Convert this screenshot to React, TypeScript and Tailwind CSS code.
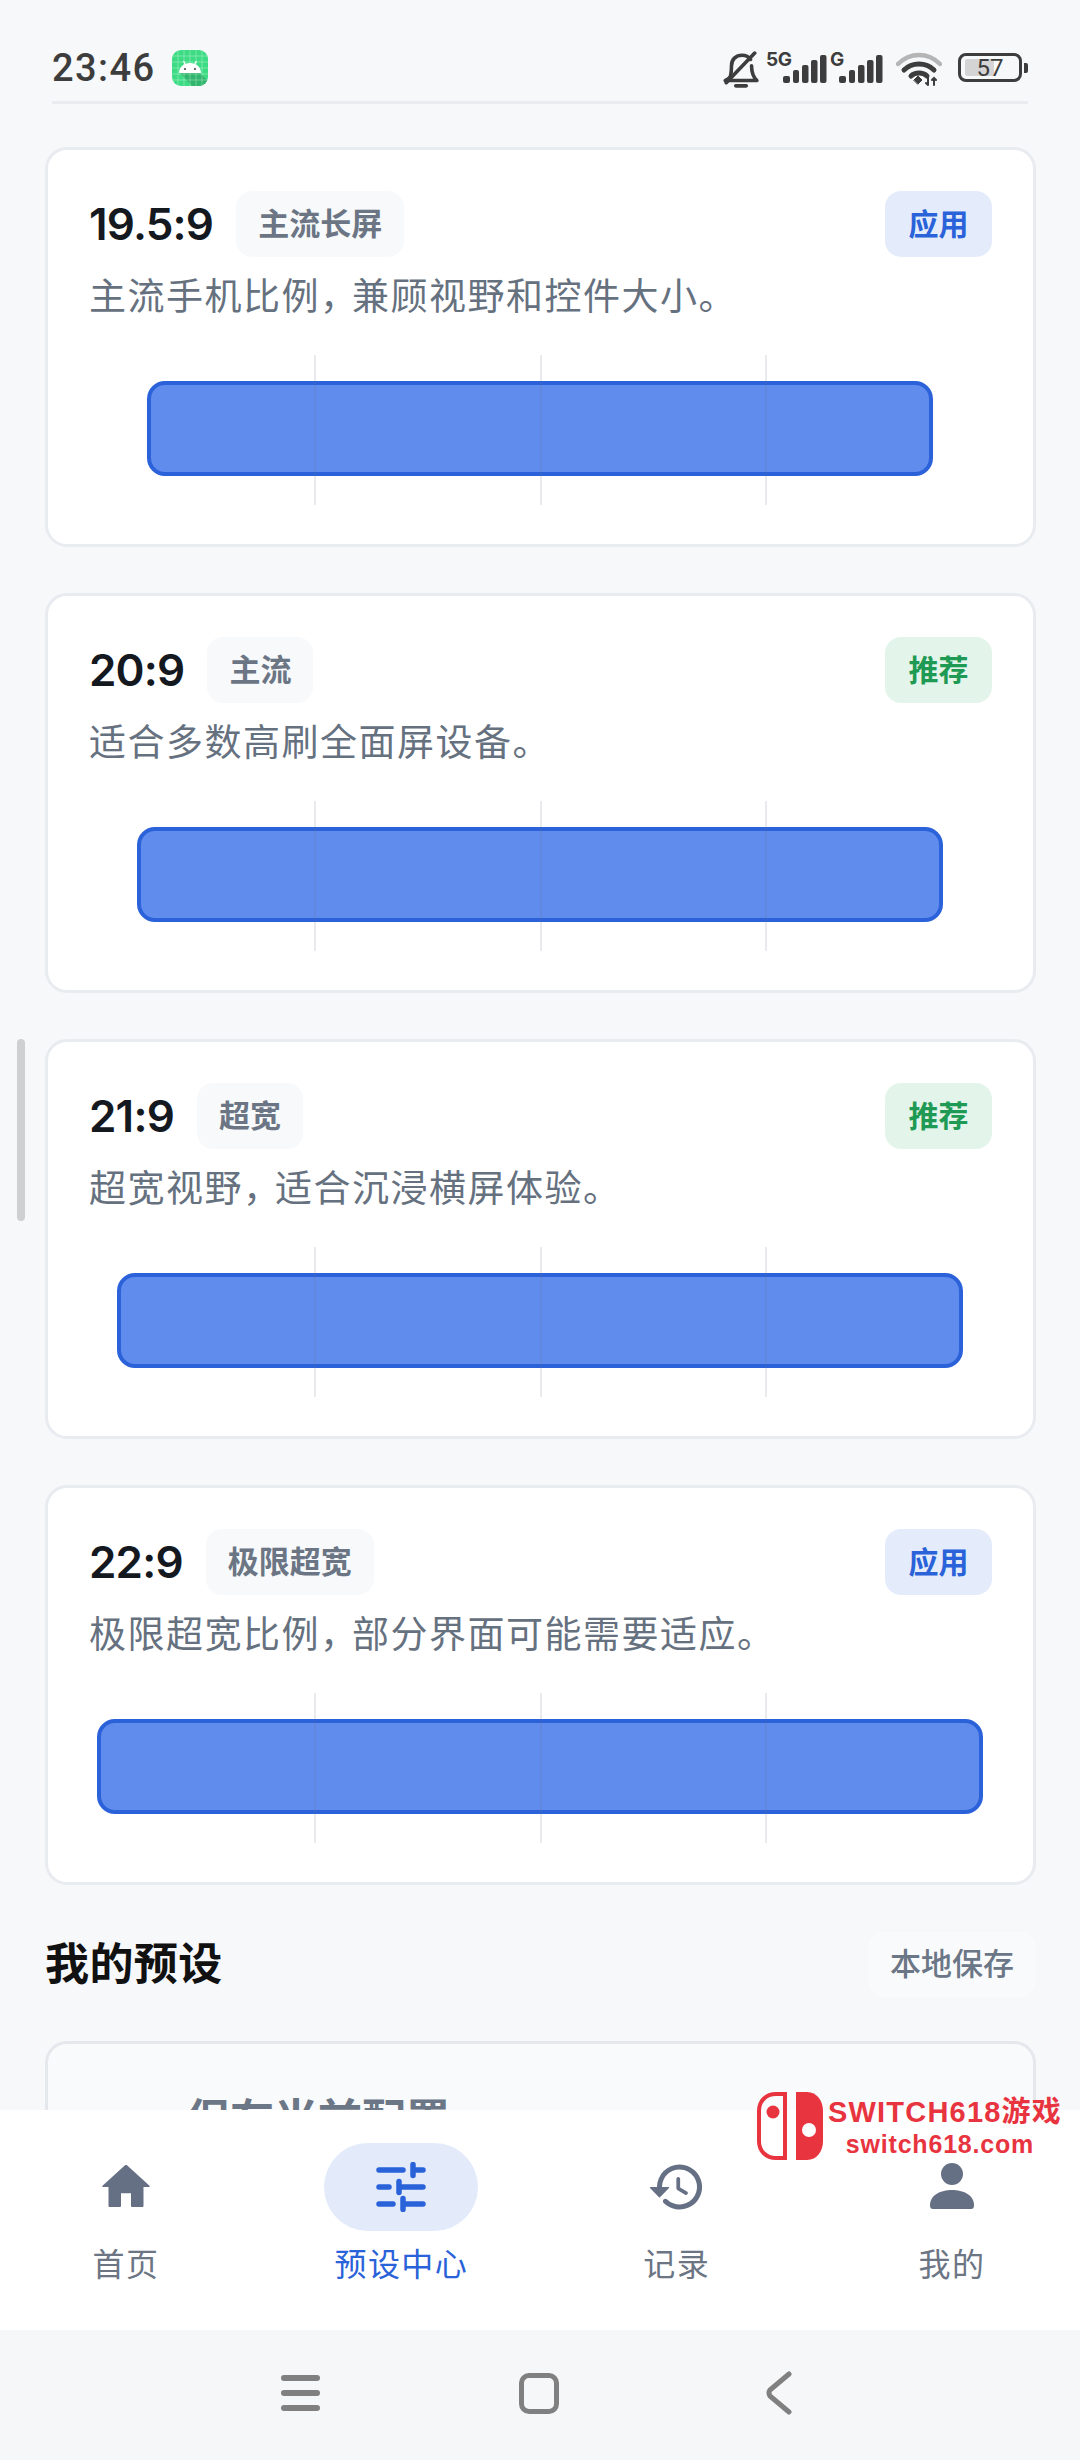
import React from 'react';

const presets = [
    { ratio: '19.5:9', tag: '主流长屏', action: '应用', desc: ['主流手机比例', '兼顾视野和控件大小。'], bar: 'w-[786px]' },
    { ratio: '20:9', tag: '主流', action: '推荐', desc: ['适合多数高刷全面屏设备。'], bar: 'w-[806px]' },
    { ratio: '21:9', tag: '超宽', action: '推荐', desc: ['超宽视野', '适合沉浸横屏体验。'], bar: 'w-[846px]' },
    { ratio: '22:9', tag: '极限超宽', action: '应用', desc: ['极限超宽比例', '部分界面可能需要适应。'], bar: 'w-[886px]' },
];

const Signal: React.FC = () => (
    <svg width="44" height="28" viewBox="0 0 44 28" fill="#3d3d3d">
        <rect x="0" y="21" width="7" height="7" rx="2" />
        <rect x="10" y="15" width="6" height="13" rx="2" />
        <rect x="19" y="10" width="6.5" height="18" rx="2" />
        <rect x="28" y="5" width="6.5" height="23" rx="2" />
        <rect x="37" y="0" width="6.5" height="28" rx="2" />
    </svg>
);

const StatusBar: React.FC = () => (
    <div className="mx-[52px] h-[104px] border-b-[3px] border-[#e9ebef] flex items-start justify-between pt-[50px]">
        <div className="flex items-center gap-[17px]">
            <span className="text-[38px] leading-[36px] font-medium text-[#3d3d3d] tracking-[1.4px] font-['Roboto',sans-serif]">23:46</span>
            <svg width="36" height="36" viewBox="0 0 36 36">
                <defs>
                    <clipPath id="appClip"><rect width="36" height="36" rx="9" /></clipPath>
                </defs>
                <g clipPath="url(#appClip)">
                    <rect width="36" height="36" fill="#3ddc84" />
                    <path d="M8 23 L28 23 L36 31 L36 36 L20 36 Z" fill="#2fb56c" />
                    <path d="M6 0V36M12 0V36M18 0V36M24 0V36M30 0V36M0 6H36M0 12H36M0 18H36M0 24H36M0 30H36" stroke="#ffffff" strokeOpacity="0.3" strokeWidth="1" />
                    <path d="M7 23 C7 17 12 13 18 13 C24 13 29 17 29 23 Z" fill="#ffffff" />
                    <path d="M11.5 11 L13.5 14.5 M24.5 11 L22.5 14.5" stroke="#ffffff" strokeWidth="1.2" />
                    <circle cx="13" cy="19" r="1" fill="#3d3d3d" />
                    <circle cx="23" cy="19" r="1" fill="#3d3d3d" />
                </g>
            </svg>
        </div>
        <div className="flex items-start text-[#3d3d3d] font-['Inter',sans-serif]">
            <svg width="36" height="38" viewBox="0 0 34 36" fill="none" stroke="#3d3d3d" strokeWidth="3.4" strokeLinecap="round" strokeLinejoin="round" className="mt-[1px]">
                <path d="M7 24 C8 20 8 17 8 14 C8 8 12 4 18 4 C21 4 24 5 26 8 M27 14 C27 19 28 24 32 28 L2 28 C4 27 6 26 7 24" />
                <path d="M3 30 L30 2" />
                <path d="M12 33 H22" />
            </svg>
            <div className="relative w-[61px] h-[36px] ml-[7px]">
                <span className="absolute left-0 top-[1px] text-[19px] leading-[18px] font-bold tracking-[-0.5px]">5G</span>
                <div className="absolute right-0 top-[5px]"><Signal /></div>
            </div>
            <div className="relative w-[53px] h-[36px] ml-[3px]">
                <span className="absolute left-0 top-[1px] text-[19px] leading-[18px] font-bold">G</span>
                <div className="absolute right-0 top-[5px]"><Signal /></div>
            </div>
            <svg width="46" height="34" viewBox="0 0 46 34" fill="none" strokeLinecap="round" className="ml-[13px] mt-[2px]">
                <path d="M2 12 C14 0 32 0 44 12" stroke="#b5b5b5" strokeWidth="4.5" />
                <path d="M8 18 C16 10 30 10 38 18" stroke="#3d3d3d" strokeWidth="5" />
                <path d="M15 24 C19 20 27 20 31 24" stroke="#3d3d3d" strokeWidth="5" />
                <path d="M18 28 L22 24 L26 28 L22 32 Z" fill="#3d3d3d" stroke="#3d3d3d" strokeWidth="1" />
                <path d="M32 26 V33 M30 31 L32 33 M38 33 V26 M36 28 L38 26 L40 28" stroke="#3d3d3d" strokeWidth="2" />
            </svg>
            <div className="flex items-center ml-[16px] mt-[3px]">
                <div className="relative w-[64px] h-[29px] rounded-[8px] border-[3px] border-[#3d3d3d] overflow-hidden">
                    <div className="absolute left-[4px] top-[3px] bottom-[3px] w-[29px] bg-[#d4d4d4] rounded-[2px]" />
                    <span className="absolute inset-0 flex items-center justify-center text-[24px] leading-none text-[#3d3d3d] font-['Roboto',sans-serif]">57</span>
                </div>
                <div className="w-[4px] h-[10px] bg-[#3d3d3d] rounded-r-[2px] ml-[2px]" />
            </div>
        </div>
    </div>
);

type Preset = (typeof presets)[number];

const PresetCard: React.FC<{ preset: Preset }> = ({ preset }) => (
    <div className="bg-white border-[3px] border-[#e8ebef] rounded-[22px] px-[41px] pt-[41px] pb-[39px]">
        <div className="flex items-center justify-between">
            <div className="flex items-center gap-[23px]">
                <span className="text-[44px] leading-[66px] font-semibold tracking-[-0.8px] text-[#14181f]">{preset.ratio}</span>
                <span className="h-[66px] px-[22px] flex items-center rounded-[16px] bg-[#f7f9fb] text-[31px] font-semibold text-[#6b7584]">{preset.tag}</span>
            </div>
            {preset.action === '推荐' ? (
                <span className="h-[66px] w-[107px] flex items-center justify-center rounded-[16px] bg-[#e3f5ea] text-[30px] font-semibold text-[#1f9a54]">{preset.action}</span>
            ) : (
                <span className="h-[66px] w-[107px] flex items-center justify-center rounded-[16px] bg-[#e4ecfb] text-[30px] font-semibold text-[#2a62d9]">{preset.action}</span>
            )}
        </div>
        <p className="mt-[14px] text-[37px] leading-[52px] tracking-[1.5px] text-[#667180]">
            {preset.desc[0]}
            {preset.desc[1] && (
                <>
                    <span className="tracking-[-5px]">，</span>
                    {preset.desc[1]}
                </>
            )}
        </p>
        <div className="relative mt-[32px] h-[150px] flex items-center justify-center">
            <div className={`${preset.bar} h-[95px] -ml-[2px] mb-[3px] rounded-[18px] bg-[#608cee] border-[4px] border-[#2b62d9]`} />
            <div className="absolute top-0 bottom-0 left-1/4 -ml-[1px] w-[2px] bg-[#64748b]/15" />
            <div className="absolute top-0 bottom-0 left-1/2 -ml-[1px] w-[2px] bg-[#64748b]/15" />
            <div className="absolute top-0 bottom-0 left-3/4 -ml-[1px] w-[2px] bg-[#64748b]/15" />
        </div>
    </div>
);

const Watermark: React.FC = () => (
    <div className="absolute left-[757px] top-[2092px] flex items-center text-[#e8343f]">
        <svg width="68" height="68" viewBox="0 0 68 68">
            <path d="M28 2 H19 C9 2 2 9 2 19 V49 C2 59 9 66 19 66 H28 Z" fill="none" stroke="#e8343f" strokeWidth="4" />
            <circle cx="16" cy="20" r="6.5" fill="#e8343f" />
            <path d="M39 0 H50 C60 0 66 9 66 19 V49 C66 59 60 68 50 68 H39 Z" fill="#e8343f" />
            <circle cx="52" cy="38" r="7" fill="#ffffff" />
        </svg>
        <div className="ml-[3px] flex flex-col items-center font-['Liberation_Sans','Noto_Sans_CJK_SC',sans-serif] font-bold">
            <span className="text-[29px] leading-[36px] tracking-[1.2px] whitespace-nowrap">SWITCH618游戏</span>
            <span className="mr-[10px] text-[25px] leading-[29px] tracking-[0.8px] whitespace-nowrap">switch618.com</span>
        </div>
    </div>
);

const NavItem: React.FC<{ label: string; active?: boolean; icon: React.ReactNode }> = ({ label, active, icon }) => (
    <div className="w-[154px] flex flex-col items-center">
        <div className={`w-[154px] h-[88px] rounded-full flex items-center justify-center ${active ? 'bg-[#e3ebfb]' : ''}`}>{icon}</div>
        <span className={`mt-[12px] text-[32px] leading-[44px] tracking-[1.4px] whitespace-nowrap ${active ? 'text-[#2a62d9]' : 'text-[#6b7584]'}`}>{label}</span>
    </div>
);

const BottomNav: React.FC = () => (
    <div className="relative h-[220px] bg-white shrink-0 flex justify-between pl-[49px] pr-[51px] pt-[33px]">
        <NavItem
            label="首页"
            icon={
                <svg width="60" height="60" viewBox="0 0 24 24" fill="#667085">
                    <path d="M10 19.5v-5h4v5c0 .3.2.5.5.5h4c.3 0 .5-.2.5-.5V12h2.2c.3 0 .4-.3.2-.5L12.4 3.3c-.2-.2-.6-.2-.8 0L2.6 11.5c-.2.2-.1.5.2.5H5v7.5c0 .3.2.5.5.5h4c.3 0 .5-.2.5-.5z" />
                </svg>
            }
        />
        <NavItem
            active
            label="预设中心"
            icon={
                <svg width="50" height="50" viewBox="0 0 50 50" fill="none" stroke="#2a62d9" strokeWidth="5.5" strokeLinecap="round">
                    <path d="M3 8 H27 M37 8 H47 M37 2.5 V13.5" />
                    <path d="M3 25 H13 M23 25 H47 M23 19.5 V30.5" />
                    <path d="M3 42 H17 M27 42 H47 M27 36.5 V47.5" />
                </svg>
            }
        />
        <NavItem
            label="记录"
            icon={
                <svg width="60" height="60" viewBox="0 0 24 24" fill="#667085">
                    <path d="M13 3a9 9 0 0 0-9 9H1.4c-.2 0-.3.2-.2.4l3.6 3.7c.1.1.3.1.4 0l3.6-3.7c.2-.2.1-.4-.2-.4H6a7 7 0 1 1 2.05 4.95c-.4-.4-1-.4-1.4 0s-.4 1 0 1.4A9 9 0 1 0 13 3z" />
                    <path d="M12.5 8c-.4 0-.75.35-.75.75V12.4c0 .35.2.68.5.86l3 1.8c.35.2.8.1 1-.26.2-.35.1-.8-.25-1l-2.75-1.63V8.75c0-.4-.35-.75-.75-.75z" />
                </svg>
            }
        />
        <NavItem
            label="我的"
            icon={
                <svg width="60" height="60" viewBox="0 0 60 60" fill="#667085">
                    <circle cx="30" cy="17" r="11" />
                    <path d="M8 48 C8 38 19 33 30 33 C41 33 52 38 52 48 C52 51 51 52 49 52 H11 C9 52 8 51 8 48 Z" />
                </svg>
            }
        />
    </div>
);

const SystemBar: React.FC = () => (
    <div className="h-[130px] bg-[#f6f7f9] shrink-0 flex items-center pl-[281px] pb-[4px]">
        <div className="w-[39px] h-[36px] flex flex-col justify-between">
            <div className="h-[6px] rounded-full bg-[#808080]" />
            <div className="h-[6px] rounded-full bg-[#808080]" />
            <div className="h-[6px] rounded-full bg-[#808080]" />
        </div>
        <div className="ml-[199px] w-[40px] h-[41px] rounded-[10px] border-[5px] border-[#808080]" />
        <svg width="26" height="44" viewBox="0 0 26 44" fill="none" stroke="#808080" strokeWidth="5" strokeLinecap="round" strokeLinejoin="round" className="ml-[207px]">
            <path d="M23 3 L4 19 Q2 22 4 25 L23 41" />
        </svg>
    </div>
);

export default function App() {
    return (
        <div className="relative w-[1080px] h-[2460px] overflow-hidden flex flex-col bg-[#f7f8fa] font-['Inter','Noto_Sans_CJK_SC',sans-serif]">
            <StatusBar />
            <div className="flex-1 overflow-hidden pl-[45px] pr-[44px] pt-[43px]">
                <div className="flex flex-col gap-[46px]">
                    {presets.map((p) => (
                        <PresetCard key={p.ratio} preset={p} />
                    ))}
                </div>
                <div className="mt-[47px] flex items-center justify-between">
                    <span className="text-[44px] leading-[65px] font-bold tracking-[0.4px] text-[#111111]">我的预设</span>
                    <span className="h-[65px] px-[22px] flex items-center rounded-[16px] bg-[#f9fafb] text-[31px] font-medium text-[#6b7686]">本地保存</span>
                </div>
                <div className="mt-[44px] h-[200px] bg-[#f9fafc] border-[3px] border-[#e4e7ec] rounded-[22px] pl-[138px] pt-[46px]">
                    <span className="text-[44px] leading-[60px] font-semibold text-[#6b7686]">保存当前配置</span>
                </div>
            </div>
            <BottomNav />
            <SystemBar />
            <div className="absolute left-[17px] top-[1039px] w-[8px] h-[182px] rounded-full bg-[#cfd0d1]" />
            <Watermark />
        </div>
    );
}
